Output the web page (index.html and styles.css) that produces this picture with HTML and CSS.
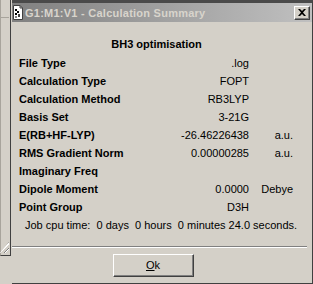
FILE: index.html
```html
<!DOCTYPE html>
<html lang="en">
<head>
    <meta charset="UTF-8">
    <title>G1:M1:V1 - Calculation Summary</title>
    <link rel="stylesheet" href="styles.css">
</head>
<body>

<div class="screen">
    <!-- window behind the dialog -->
    <div class="side">
        <div class="side-hline"></div>
        <div class="grip"></div>
    </div>

    <div class="dialog">
        <div class="titlebar">
            <svg class="app-icon" width="10" height="15" viewBox="0 0 10 15">
                <path d="M0.5 0.5 H7 L9.5 3 V14.5 H0.5 Z" fill="#fff" stroke="#404040"/>
                <path d="M7 0.5 V3 H9.5" fill="none" stroke="#404040"/>
                <rect x="2" y="4" width="2" height="2" fill="#000"/>
                <rect x="4" y="6" width="2" height="2" fill="#000"/>
                <rect x="2" y="8" width="2" height="2" fill="#000"/>
                <rect x="5" y="9" width="2" height="3" fill="#404040"/>
                <rect x="2" y="11" width="2" height="2" fill="#808080"/>
            </svg>
            <span class="title">G1:M1:V1 - Calculation Summary</span>
            <div class="close-btn">
                <svg width="8" height="7" viewBox="0 0 8 7">
                    <path d="M0 0 H2 L4 2 L6 0 H8 L5 3.5 L8 7 H6 L4 5 L2 7 H0 L3 3.5 Z" fill="#000"/>
                </svg>
            </div>
        </div>

        <div class="content">
            <div class="heading">BH3 optimisation</div>
            <div class="summary">
                <div class="label">File Type</div><div class="value">.log</div><div class="unit"></div>
                <div class="label">Calculation Type</div><div class="value">FOPT</div><div class="unit"></div>
                <div class="label">Calculation Method</div><div class="value">RB3LYP</div><div class="unit"></div>
                <div class="label">Basis Set</div><div class="value">3-21G</div><div class="unit"></div>
                <div class="label">E(RB+HF-LYP)</div><div class="value">-26.46226438</div><div class="unit">a.u.</div>
                <div class="label">RMS Gradient Norm</div><div class="value">0.00000285</div><div class="unit">a.u.</div>
                <div class="label">Imaginary Freq</div><div class="value"></div><div class="unit"></div>
                <div class="label">Dipole Moment</div><div class="value">0.0000</div><div class="unit">Debye</div>
                <div class="label">Point Group</div><div class="value">D3H</div><div class="unit"></div>
            </div>
            <div class="cpu-time">Job cpu time:  0 days  0 hours  0 minutes 24.0 seconds.</div>
        </div>

        <div class="separator"></div>

        <div class="footer">
            <div class="btn"><u>O</u>k</div>
        </div>
    </div>
</div>

</body>
</html>
```

FILE: styles.css
```css
body {
    margin: 0;
    padding: 0;
    background-color: #d4d0c8;
    font-family: "Liberation Sans", Arial, sans-serif;
    font-size: 11px;
    color: #000;
}

.screen {
    display: flex;
    width: 313px;
    height: 284px;
    overflow: hidden;
    background-color: #d4d0c8;
}

/* left strip: edge of the window behind */
.side {
    position: relative;
    width: 11px;
    flex-shrink: 0;
    border-left: 1px solid #a8a49c;
    box-sizing: border-box;
    height: 256px;
    border-bottom: 1px solid #404040;
    border-right: 1px solid #404040;
}

.side-hline {
    position: absolute;
    top: 17px;
    left: 0;
    width: 8px;
    height: 1px;
    background-color: #a8a49c;
}

.grip {
    position: absolute;
    right: 1px;
    bottom: 2px;
    width: 9px;
    height: 11px;
    background: repeating-linear-gradient(135deg, transparent 0 2px, #808080 2px 3px, #fff 3px 4px);
    clip-path: polygon(100% 0, 100% 100%, 0 100%);
}

.dialog {
    flex: 1;
    display: flex;
    flex-direction: column;
    border-top: 3px solid #4a4a4a;
    border-right: 1px solid #404040;
    border-bottom: 1px solid #404040;
    margin-left: 1px;
}

.titlebar {
    display: flex;
    align-items: center;
    height: 19px;
    padding: 0 2px 0 1px;
    background: linear-gradient(to right, #808080, #c0c0c0);
}

.app-icon {
    margin-right: 2px;
    flex-shrink: 0;
}

.title {
    flex: 1;
    font-weight: bold;
    color: #d8d4cc;
    white-space: nowrap;
    letter-spacing: 0.25px;
}

.close-btn {
    display: flex;
    align-items: center;
    justify-content: center;
    width: 16px;
    height: 14px;
    box-sizing: border-box;
    background-color: #d4d0c8;
    border-top: 1px solid #fff;
    border-left: 1px solid #fff;
    border-right: 1px solid #404040;
    border-bottom: 1px solid #404040;
    box-shadow: inset -1px -1px 0 #808080;
}

.content {
    padding: 13px 0 0 7px;
    flex: 1;
}

.heading {
    font-weight: bold;
    text-align: center;
    line-height: 18px;
    margin-bottom: 1px;
    padding-right: 18px;
}

.summary {
    display: grid;
    grid-template-columns: 140px 90px 44px;
    grid-auto-rows: 18px;
    line-height: 18px;
}

.label {
    font-weight: bold;
}

.value,
.unit {
    text-align: right;
}

.cpu-time {
    white-space: pre;
    line-height: 18px;
    padding-left: 6px;
}

.separator {
    height: 0;
    margin-right: 5px;
    border-top: 1px solid #808080;
    border-bottom: 1px solid #fff;
}

.footer {
    display: flex;
    justify-content: center;
    padding: 6px 5px 6px 0;
}

.btn {
    width: 81px;
    height: 23px;
    box-sizing: border-box;
    border-top: 1px solid #fff;
    border-left: 1px solid #fff;
    border-right: 1px solid #404040;
    border-bottom: 1px solid #404040;
    box-shadow: inset -1px -1px 0 #808080;
    text-align: center;
    line-height: 20px;
    margin-right: 13px;
}
```
